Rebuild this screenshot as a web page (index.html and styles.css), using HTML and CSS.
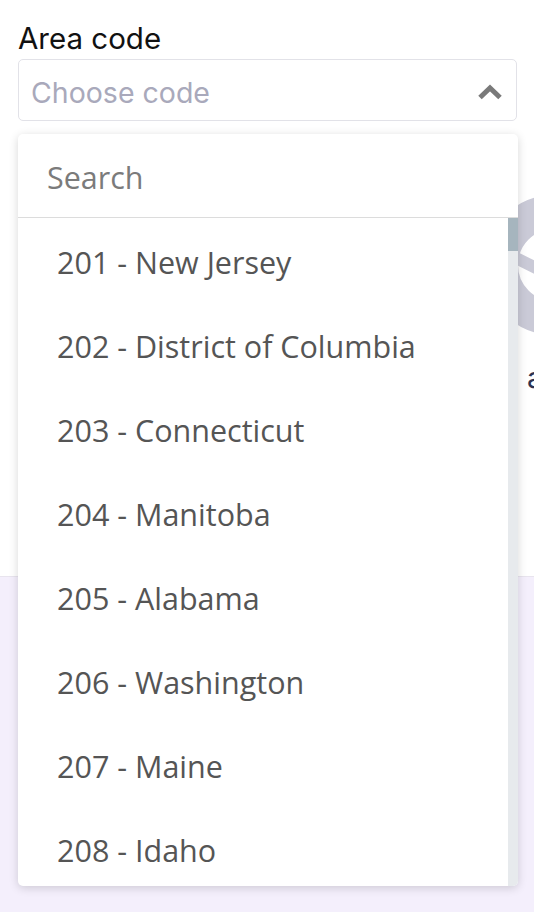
FILE: index.html
```html
<!DOCTYPE html>
<html lang="en">
<head>
    <meta charset="UTF-8">
    <meta name="viewport" content="width=device-width, initial-scale=1.0">
    <title>Area code</title>
    <link rel="stylesheet" href="styles.css">
</head>
<body>

<div class="page">

    <section class="top">

        <!-- Area code field -->
        <div class="field">
            <label class="field-label" for="areaSearch">Area code</label>
            <div class="select">
                <span class="placeholder">Choose code</span>
                <svg class="chevron" width="26" height="16" viewBox="0 0 26 16">
                    <path d="M3 13.5 L13 4 L23 13.5" fill="none" stroke="#7a7a7a" stroke-width="5" stroke-linejoin="miter"/>
                </svg>
            </div>

            <!-- Open dropdown -->
            <div class="dropdown">
                <input class="search" id="areaSearch" type="text" placeholder="Search">
                <div class="list">
                    <ul class="options">
                        <li>201 - New Jersey</li>
                        <li>202 - District of Columbia</li>
                        <li>203 - Connecticut</li>
                        <li>204 - Manitoba</li>
                        <li>205 - Alabama</li>
                        <li>206 - Washington</li>
                        <li>207 - Maine</li>
                        <li>208 - Idaho</li>
                    </ul>
                    <div class="scrollbar">
                        <div class="thumb"></div>
                    </div>
                </div>
            </div>
        </div>

        <!-- Content behind the dropdown -->
        <div class="behind">
            <svg class="wheel" width="200" height="200" viewBox="0 0 200 200">
                <circle cx="93" cy="90" r="53" fill="none" stroke="#cacad7" stroke-width="34"/>
                <path d="M40 75.5 L93 102" stroke="#cacad7" stroke-width="12"/>
            </svg>
            <p class="behind-text">a</p>
        </div>

    </section>

    <section class="bottom"></section>

</div>

</body>
</html>
```

FILE: styles.css
```css
body {
    margin: 0;
    font-family: 'Inter', sans-serif;
    background-color: #fff;
    overflow: hidden;
}

.page {
    width: 534px;
    height: 912px;
    display: flex;
    flex-direction: column;
    overflow: hidden;
}

.top {
    height: 576px;
    background-color: #fff;
    border-bottom: 1px solid #e8e4ee;
    position: relative;
}

.bottom {
    flex: 1;
    background-color: #f4effc;
}

.field {
    padding: 20px 17px 0 18px;
    position: relative;
    z-index: 2;
}

.field-label {
    display: block;
    font-size: 29.5px;
    line-height: 36px;
    color: #111;
    margin-bottom: 3px;
}

.select {
    height: 62px;
    box-sizing: border-box;
    border: 1px solid #e2e2e8;
    border-radius: 5px;
    padding: 4px 13px 0 12px;
    display: flex;
    align-items: center;
    justify-content: space-between;
}

.placeholder {
    font-size: 28.5px;
    color: #a9a9bb;
}

.chevron {
    display: block;
}

.dropdown {
    position: absolute;
    top: 134px;
    left: 18px;
    width: 500px;
    height: 752px;
    background-color: #fff;
    border-radius: 5px;
    box-shadow: 0 2px 10px rgba(0, 0, 0, 0.16);
    overflow: hidden;
    display: flex;
    flex-direction: column;
}

.search {
    display: block;
    width: 100%;
    height: 84px;
    box-sizing: border-box;
    margin: 0;
    border: none;
    border-bottom: 1px solid #dcdcdc;
    padding: 2px 0 0 29px;
    font-family: 'Open Sans', sans-serif;
    font-size: 30.5px;
    color: #555;
    outline: none;
    background: transparent;
}

.search::placeholder {
    color: #7b7b7b;
}

.list {
    flex: 1;
    display: flex;
    overflow: hidden;
}

.options {
    flex: 1;
    list-style: none;
    margin: 0;
    padding: 0;
}

.options li {
    height: 84px;
    line-height: 89px;
    padding-left: 39px;
    font-family: 'Open Sans', sans-serif;
    font-size: 30.5px;
    color: #555;
    white-space: nowrap;
}

.scrollbar {
    width: 10px;
    background-color: #e7eaed;
}

.thumb {
    height: 33px;
    background-color: #a6b5be;
}

.behind {
    position: absolute;
    top: 175px;
    left: 461px;
}

.wheel {
    display: block;
}

.behind-text {
    margin: 0;
    padding-left: 66px;
    margin-top: -15px;
    font-size: 29px;
    color: #2d3250;
    white-space: nowrap;
}
```
